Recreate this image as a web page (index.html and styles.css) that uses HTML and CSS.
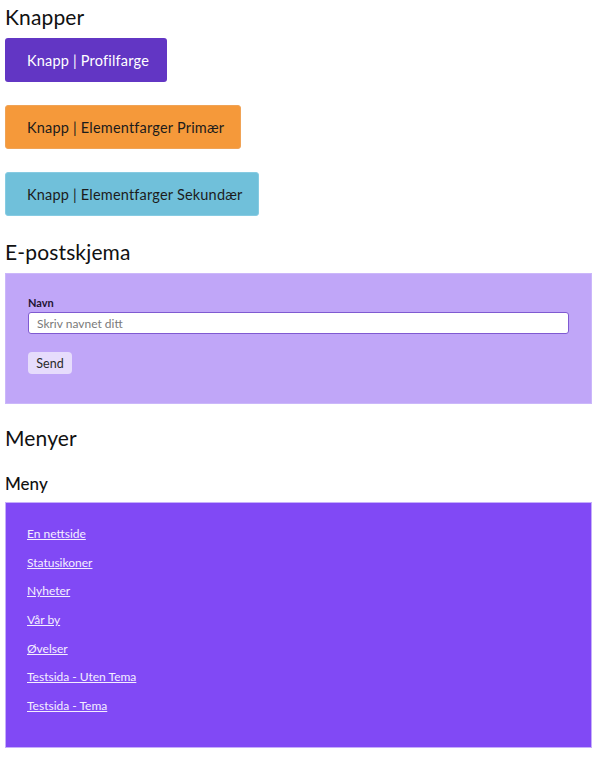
FILE: index.html
```html
<!DOCTYPE html>
<html lang="no">
<head>
<meta charset="utf-8">
<title>Komponenter</title>
<link rel="stylesheet" href="styles.css">
</head>
<body>
<main class="page">
  <h2 class="h-section h-knapper">Knapper</h2>
  <div class="buttons">
    <a class="btn btn-profil" href="#">Knapp | Profilfarge</a>
    <a class="btn btn-primary" href="#">Knapp | Elementfarger Primær</a>
    <a class="btn btn-secondary" href="#">Knapp | Elementfarger Sekundær</a>
  </div>

  <h2 class="h-section h-epost">E-postskjema</h2>
  <form class="mailform">
    <label class="label" for="navn">Navn</label>
    <input class="input" id="navn" type="text" placeholder="Skriv navnet ditt">
    <button class="send" type="button">Send</button>
  </form>

  <h2 class="h-section h-menyer">Menyer</h2>
  <h3 class="h-sub">Meny</h3>
  <nav class="menu">
    <a href="#">En nettside</a>
    <a href="#">Statusikoner</a>
    <a href="#">Nyheter</a>
    <a href="#">Vår by</a>
    <a href="#">Øvelser</a>
    <a href="#">Testsida - Uten Tema</a>
    <a href="#">Testsida - Tema</a>
  </nav>
</main>
</body>
</html>
```

FILE: styles.css
```css
* { box-sizing: border-box; }
html, body { margin: 0; padding: 0; background: #ffffff; }
body {
  font-family: Lato, "Noto Sans", "DejaVu Sans", sans-serif;
  color: #1a1a1a;
}
.page {
  display: flex;
  flex-direction: column;
  align-items: flex-start;
  padding: 0 8px 0 5px;
}
.h-section {
  margin: 0;
  font-weight: 400;
  font-size: 21px;
  line-height: 30px;
  letter-spacing: 0.15px;
  color: #111;
}
.h-knapper { margin-top: 2px; }
.buttons {
  display: flex;
  flex-direction: column;
  align-items: flex-start;
  gap: 23px;
  margin-top: 6px;
}
.btn {
  display: flex;
  align-items: center;
  height: 44px;
  padding: 0 0 0 22px;
  border-radius: 3px;
  font-size: 14.5px;
  letter-spacing: 0.2px;
  text-decoration: none;
  white-space: nowrap;
}
.btn-profil { background: #6236c4; color: #ffffff; width: 162px; }
.btn-primary { background: #f5993a; color: #1c1c1c; width: 236px; border: 1px solid #f0a356; padding-left: 21px; }
.btn-secondary { background: #70c0da; color: #1c1c1c; width: 254px; border: 1px solid #86cbe2; padding-left: 21px; }

.h-epost { margin-top: 21px; }
.mailform {
  align-self: stretch;
  margin: 6px 0 0;
  background: #c0a6f8;
  border: 1px solid #cbb7fa;
  height: 131px;
  padding: 22px 22px 0 22px;
  display: flex;
  flex-direction: column;
  align-items: flex-start;
}
.label {
  font-size: 11px;
  font-weight: 700;
  color: #1e1433;
  line-height: 14px;
  margin-top: 0;
}
.input {
  align-self: stretch;
  height: 22px;
  margin-top: 2px;
  border: 1px solid #7f5ad1;
  border-radius: 3px;
  background: #fff;
  padding: 0 8px;
  font-family: inherit;
  font-size: 12px;
  color: #333;
}
.input::placeholder { color: #7a7a7a; }
.send {
  margin-top: 18px;
  height: 22px;
  width: 44px;
  padding: 0;
  border: none;
  border-radius: 4px;
  background: #e6dcfc;
  font-family: inherit;
  font-size: 12.5px;
  color: #2a2a2a;
}

.h-menyer { margin-top: 19px; }
.h-sub {
  margin: 19px 0 0;
  font-size: 17px;
  font-weight: 500;
  line-height: 24px;
  color: #111;
}
.menu {
  align-self: stretch;
  margin-top: 6px;
  height: 246px;
  background: #8149f5;
  border: 1px solid #c6aefb;
  padding: 23px 22px 0 21px;
  display: flex;
  flex-direction: column;
  align-items: flex-start;
  gap: 12.7px;
}
.menu a {
  font-size: 12px;
  line-height: 16px;
  color: #f4eeff;
  text-decoration: underline;
}
```
